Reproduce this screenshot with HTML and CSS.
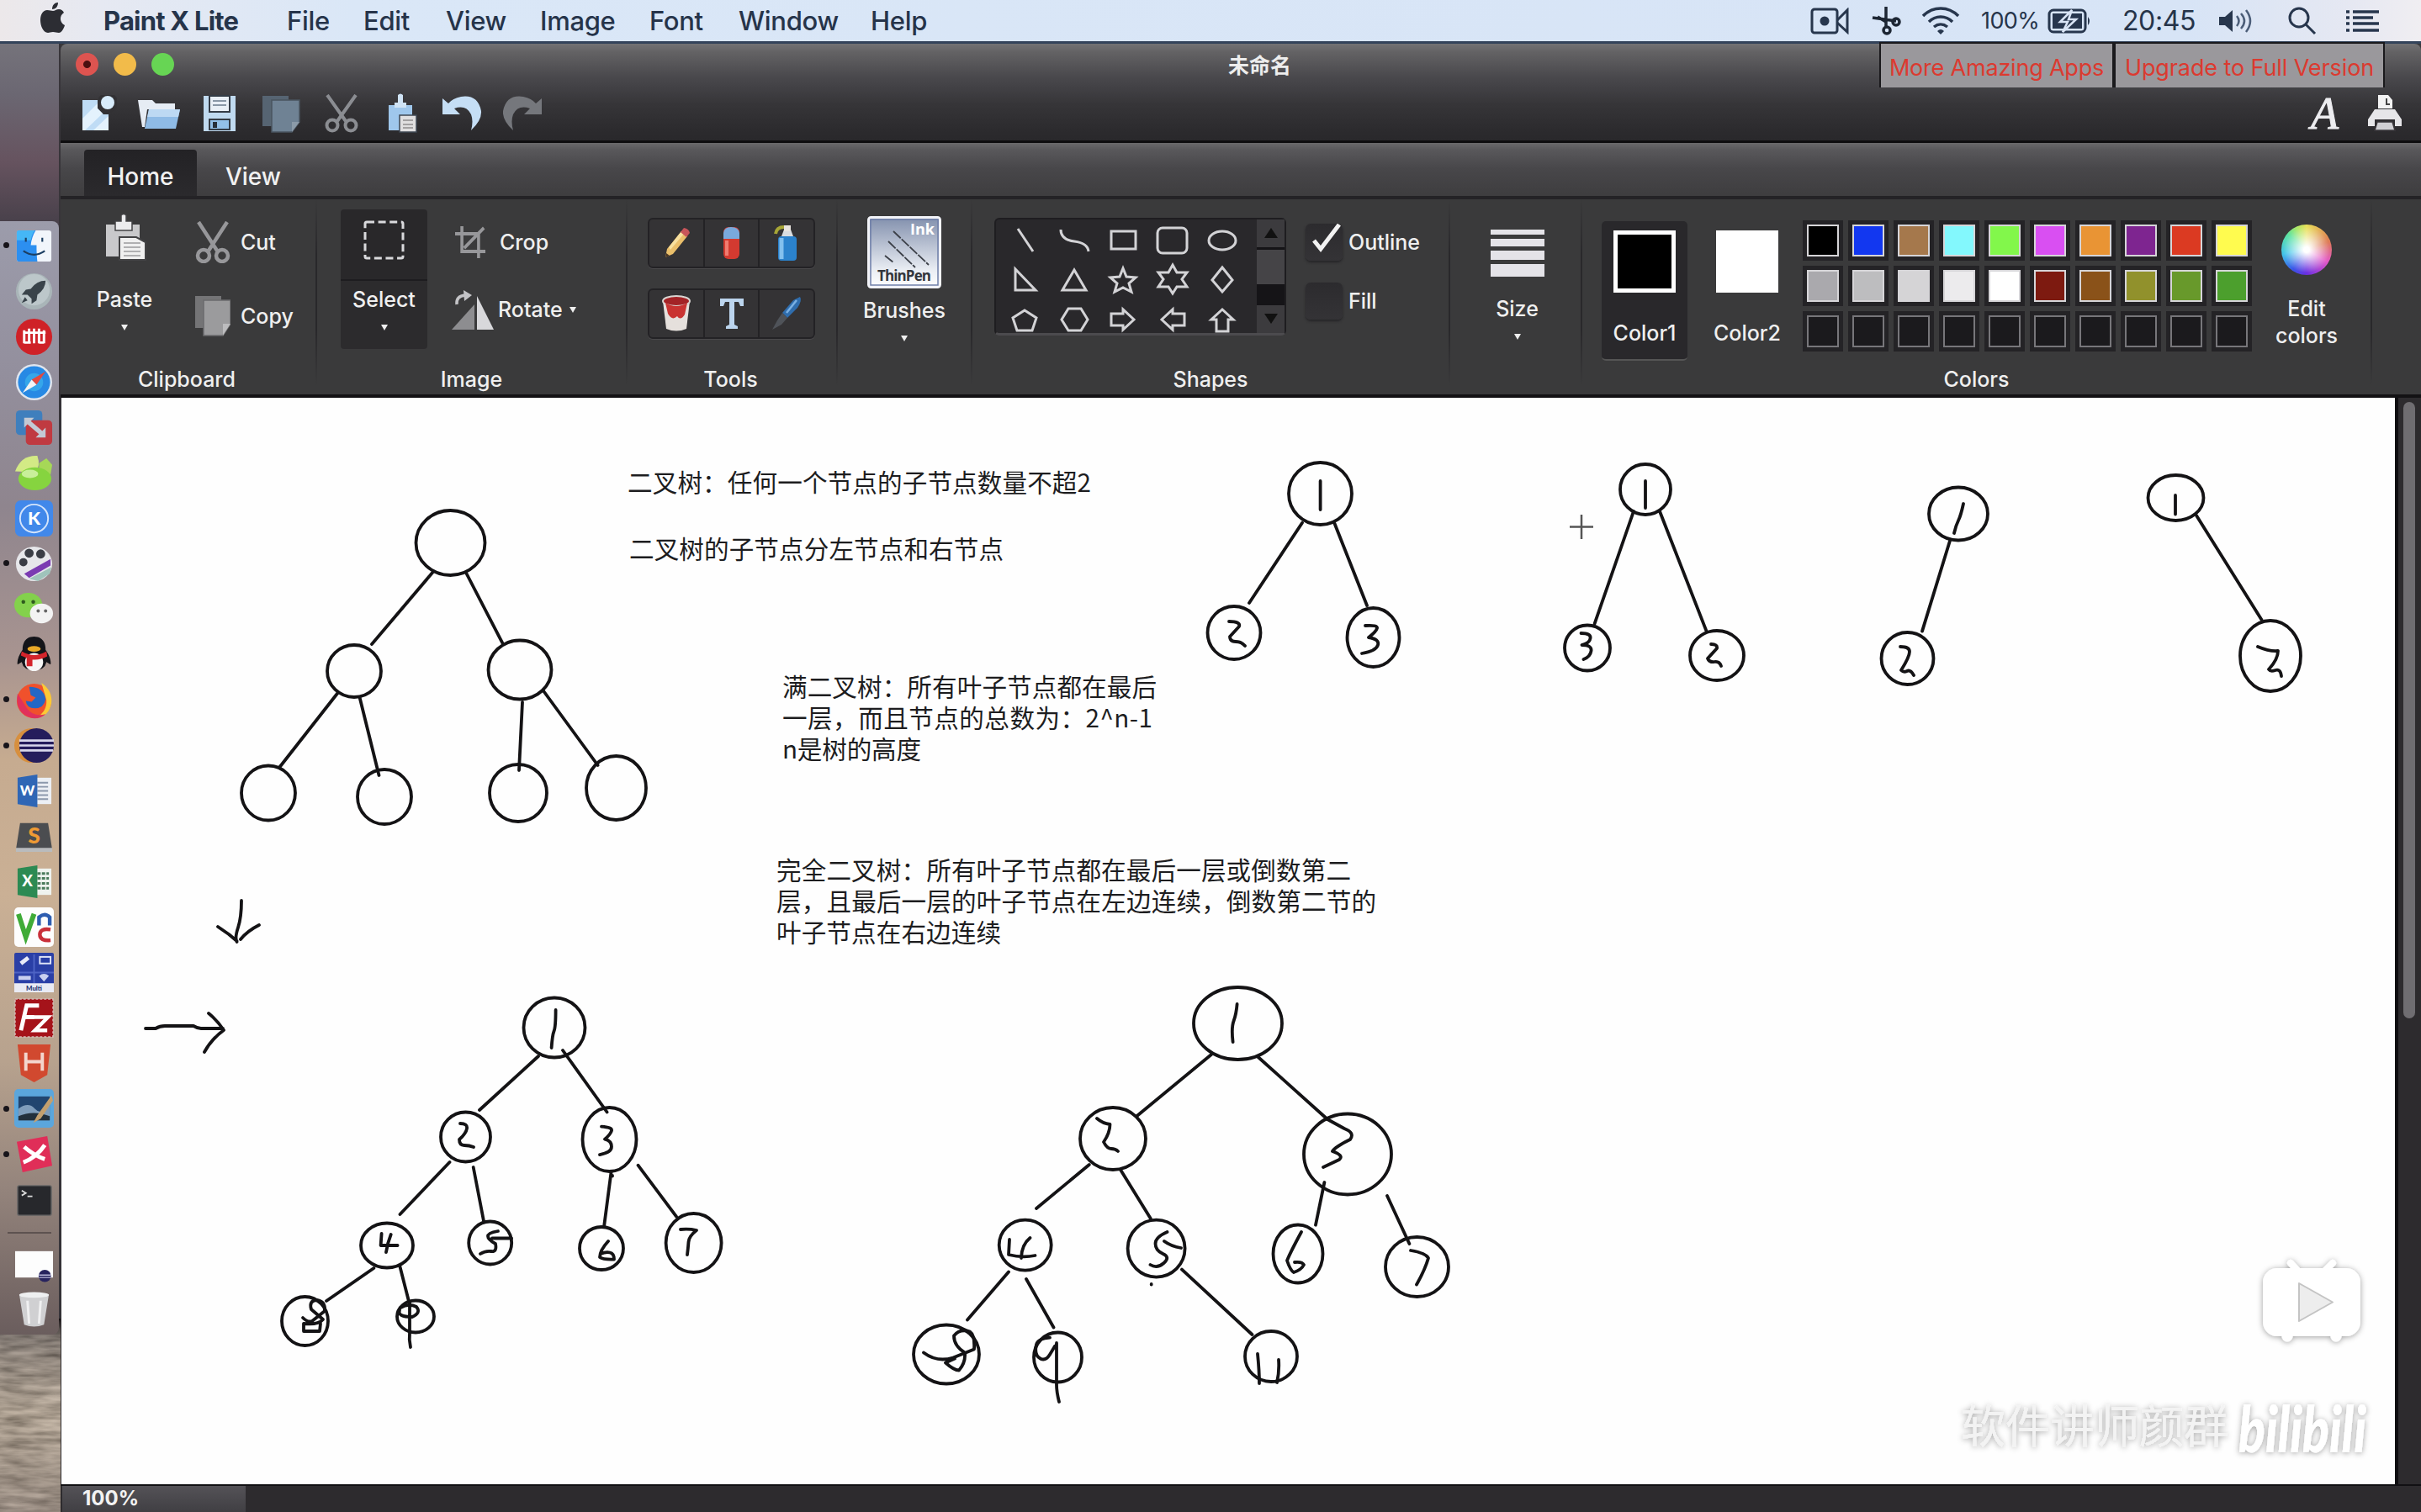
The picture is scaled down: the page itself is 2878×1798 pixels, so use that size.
FILE: index.html
```html
<!DOCTYPE html>
<html lang="zh">
<head>
<meta charset="utf-8">
<title>Paint X Lite</title>
<link rel="stylesheet" href="styles.css">
</head>
<body>
<header class="menubar">
  <nav class="menus">
    <svg width="32" height="40" viewBox="0 0 32 40"><path d="M22 2c0 5-3 8-7 8 0-5 3-8 7-8zM16 12c2 0 4-2 7-2 3 0 5 2 6 4-6 4-5 12 1 15-1 4-4 9-7 9s-4-1-7-1-4 1-6 1C4 38 1 29 1 23 1 15 5 11 9 11c3 0 5 1 7 1z" fill="#2c2d33"/></svg>
    <b>Paint X Lite</b><span>File</span><span>Edit</span><span>View</span><span>Image</span><span>Font</span><span>Window</span><span>Help</span>
  </nav>
  <div class="tray">
    <svg width="48" height="32" viewBox="0 0 48 32" fill="none" stroke="#27364d" stroke-width="3"><rect x="2" y="2" width="30" height="28" rx="3"/><path d="M32 15L44 3v26L32 18"/><circle cx="17" cy="16" r="5.500" fill="#27364d" stroke="none"/></svg>
    <svg width="36" height="34" viewBox="0 0 36 34" fill="none" stroke="#1d2633" stroke-width="3.500"><path d="M18 0v24M2 13l28 4M8 12l10 6"/><circle cx="19" cy="28" r="4"/><circle cx="30" cy="18" r="4"/></svg>
    <svg width="46" height="34" viewBox="0 0 46 34" fill="none" stroke="#27364d" stroke-width="3.500"><path d="M2 11C14-1 32-1 44 11M9 18c8-8 20-8 28 0M15 24c5-4 11-4 16 0"/><path d="M19 29q4-4 8 0l-4 4z" fill="#27364d" stroke="none"/></svg>
    <span class="pct">100%</span>
    <svg width="52" height="30" viewBox="0 0 52 30"><rect x="2" y="2" width="43" height="26" rx="5" fill="none" stroke="#27364d" stroke-width="3"/><rect x="6" y="6" width="35" height="18" fill="#27364d"/><path d="M48 10q4 5 0 10z" fill="#27364d"/><path d="M29 2L15 16h9l-6 12 16-15h-9z" fill="#27364d" stroke="#d9e4f5" stroke-width="2.500"/></svg>
    <span class="time">20:45</span>
    <svg width="42" height="30" viewBox="0 0 42 30" fill="none" stroke="#4b5d78" stroke-width="2.500"><path d="M1 10h7l9-8v26l-9-8H1z" fill="#27364d" stroke="none"/><path d="M22 9q5 6 0 12M27 6q8 9 0 18M33 2q10 13 0 26"/></svg>
    <svg width="36" height="34" viewBox="0 0 36 34" fill="none" stroke="#27364d" stroke-width="3"><circle cx="14" cy="13" r="11"/><path d="M22 21l11 11"/></svg>
    <svg width="42" height="28" viewBox="0 0 42 28" fill="none" stroke="#27364d" stroke-width="3.500"><path d="M1 3h4M9 3h31M1 10h4M9 10h24M1 17h4M9 17h31M1 25h4M9 25h31"/></svg>
  </div>
</header>

<div class="desktop">
<aside class="side">
  <svg class="wood" width="72" height="230" viewBox="0 0 72 230"><defs><filter id="grain" x="0" y="0" width="100%" height="100%"><feTurbulence type="fractalNoise" baseFrequency="0.025 0.14" numOctaves="3" seed="6"/><feColorMatrix values="0.9 0 0 0 0.04  0.8 0 0 0 0.03  0.7 0 0 0 0.02  0 0 0 0 1"/></filter><linearGradient id="wshade" x2="0" y2="1"><stop offset="0" stop-color="#120d10"/><stop offset=".1" stop-color="#3a3434" stop-opacity=".4"/><stop offset=".5" stop-color="#87755f" stop-opacity=".3"/><stop offset="1" stop-color="#5c4d46" stop-opacity=".4"/></linearGradient></defs><rect width="72" height="230" filter="url(#grain)"/><rect width="72" height="230" fill="url(#wshade)"/></svg>
  <div class="dock">
    <div class="slot on"><svg viewBox="0 0 48 48"><rect x="3" y="5" width="42" height="38" rx="3" fill="#f1f5fb"/><path d="M6 5h20q-5 8-6 18h7q0 12 1 20H6q-3 0-3-3V8q0-3 3-3z" fill="#2c8ff0"/><path d="M6 5h19q-4 5-5 12H3V8q0-3 3-3z" fill="#45b7f6"/><path d="M14 14v5M34 14v5M11 30q13 9 26 0" fill="none" stroke="#1c3f63" stroke-width="2.200"/></svg></div>
    <div class="slot"><svg viewBox="0 0 48 48"><circle cx="24" cy="24" r="22" fill="#a9b5b8"/><circle cx="24" cy="22" r="19" fill="#bcc7ca"/><path d="M38 11q-11 0-18 10l-6 1-5 6 7 0 5 5v6l6-4 1-7q10-7 10-17zM13 31l-4 7 7-3z" fill="#39434a"/></svg></div>
    <div class="slot"><svg viewBox="0 0 48 48"><circle cx="24" cy="24" r="22" fill="#cf2127"/><path d="M12 16v16M11 19h27M18 14v18M24 14v18M30 14v18M36 16v16M12 31h8M30 31h6" stroke="#fff" stroke-width="3" fill="none"/></svg></div>
    <div class="slot"><svg viewBox="0 0 48 48"><circle cx="24" cy="24" r="22" fill="#dfe5ee"/><circle cx="24" cy="24" r="19.500" fill="#2789e4"/><circle cx="24" cy="24" r="11" fill="#35a6ea"/><path d="M38 11L21 21l6 6z" fill="#e2483f"/><path d="M10 37l17-10-6-6z" fill="#f3f3f3"/></svg></div>
    <div class="slot"><svg viewBox="0 0 48 48"><rect x="2" y="3" width="32" height="30" rx="5" fill="#3f7fbd"/><rect x="14" y="15" width="32" height="30" rx="5" fill="#c03a41"/><path d="M12 12h12l-4 4 14 12 4-4v12H26l4-4-14-12-4 4z" fill="#c3c9d4"/></svg></div>
    <div class="slot"><svg viewBox="0 0 48 48"><path d="M1 22Q8 2 28 3q4 12-2 20z" fill="#d3ea85"/><path d="M30 12l9-6 7 8-2 12-14-4z" fill="#a6d857"/><ellipse cx="25" cy="31" rx="20" ry="14" fill="#86d43f"/><ellipse cx="19" cy="25" rx="10" ry="5" fill="#c8ef9a"/></svg></div>
    <div class="slot"><svg viewBox="0 0 48 48"><rect x="1" y="2" width="46" height="44" rx="7" fill="#4188ea"/><circle cx="24" cy="24" r="17" fill="none" stroke="#d3e4fb" stroke-width="2"/><text x="24" y="32" class="ico" font-size="22" text-anchor="middle" fill="#fff">K</text></svg></div>
    <div class="slot on"><svg viewBox="0 0 48 48"><ellipse cx="24" cy="24" rx="22" ry="21" fill="#e6e6ea"/><circle cx="18" cy="11" r="5.500" fill="#3a3d45"/><circle cx="32" cy="12" r="5.500" fill="#3a3d45"/><circle cx="11" cy="22" r="5" fill="#3a3d45"/><path d="M12 36L44 18v8L18 41z" fill="#7b3bb2"/><path d="M18 42l27-14-2 8-14 9z" fill="#9fc3bb"/></svg></div>
    <div class="slot"><svg viewBox="0 0 48 48"><ellipse cx="17" cy="19" rx="17" ry="15" fill="#83d14c"/><circle cx="11" cy="15" r="2.300" fill="#2f5b1e"/><circle cx="23" cy="15" r="2.300" fill="#2f5b1e"/><ellipse cx="33" cy="29" rx="14" ry="12" fill="#f3f3f3"/><circle cx="29" cy="26" r="2" fill="#666"/><circle cx="38" cy="26" r="2" fill="#666"/></svg></div>
    <div class="slot"><svg viewBox="0 0 48 48"><path d="M24 2c-10 0-14 7-14 16-5 7-7 14-6 18l5-3q2 10 15 10t15-10l5 3c1-4-1-11-6-18C38 9 34 2 24 2z" fill="#14151a"/><ellipse cx="24" cy="33" rx="11" ry="11" fill="#f6f6f6"/><ellipse cx="24" cy="17" rx="8" ry="3.500" fill="#eaa928"/><path d="M9 20q15 9 30 0l1 6q-9 5-18 4v8h-7v-10l-7-3z" fill="#d4242c"/></svg></div>
    <div class="slot on"><svg viewBox="0 0 48 48"><circle cx="24" cy="25" r="21" fill="#f0512c"/><path d="M33 3q14 10 12 25-3 16-19 18 14-8 13-22z" fill="#fbc936"/><path d="M4 16Q0 40 22 46q10 1 16-5-14 4-22-6z" fill="#e0315c"/><path d="M18 8q18 0 20 15-2 11-13 11-10 0-11-9l7 1 5-5-6-3z" fill="#2467c4"/></svg></div>
    <div class="slot on"><svg viewBox="0 0 48 48"><circle cx="21" cy="24" r="21" fill="#d78f3e"/><ellipse cx="27" cy="24" rx="21" ry="21" fill="#251d5c"/><path d="M6 18h42M6 24h42M7 30h40" stroke="#d7d6ea" stroke-width="2.600"/></svg></div>
    <div class="slot"><svg viewBox="0 0 48 48"><rect x="24" y="8" width="21" height="32" fill="#eceff4"/><path d="M28 14h13M28 19h13M28 24h13M28 29h13M28 34h13" stroke="#8b98ab" stroke-width="2"/><path d="M4 8l24-4v40L4 40z" fill="#2f66b5"/><text x="16" y="30" class="ico" font-size="17" text-anchor="middle" fill="#fff">W</text></svg></div>
    <div class="slot"><svg viewBox="0 0 48 48"><path d="M7 8h34l5 32H2z" fill="#4b4d50"/><path d="M2 38h44v5H2z" fill="#b9bbbd"/><text x="24" y="33" class="ico" font-size="27" text-anchor="middle" fill="#ef9b34">S</text></svg></div>
    <div class="slot"><svg viewBox="0 0 48 48"><rect x="24" y="8" width="21" height="32" fill="#eff3ef"/><path d="M28 14h14M28 20h14M28 26h14M28 32h14" stroke="#4a7a5b" stroke-width="3" stroke-dasharray="4 1.500"/><path d="M4 8l24-4v40L4 40z" fill="#2c8a53"/><text x="16" y="30" class="ico" font-size="19" text-anchor="middle" fill="#fff">X</text></svg></div>
    <div class="slot"><svg viewBox="0 0 48 48"><rect width="48" height="48" rx="5" fill="#fdfdfd"/><path d="M5 8l9 28L24 8" fill="none" stroke="#3fab37" stroke-width="6"/><path d="M30 22V12q7-6 13 0v10" fill="none" stroke="#2d5db0" stroke-width="4.500"/><path d="M44 27q-13-2-13 6t13 7" fill="none" stroke="#c9303a" stroke-width="4.500"/></svg></div>
    <div class="slot"><svg viewBox="0 0 48 48"><rect width="48" height="48" rx="2" fill="#2a3fa6"/><path d="M0 24h48M24 2v35" stroke="#4d63c4" stroke-width="2"/><path d="M8 13l9-7" stroke="#e8ebf8" stroke-width="5"/><rect x="31" y="5" width="13" height="8" fill="none" stroke="#dfe4f8" stroke-width="2"/><path d="M5 28h15v5H5zM30 28q6-5 12 0l-6 7z" fill="#c9d0f0"/><rect y="37" width="48" height="11" fill="#e9ebf4"/><text x="24" y="46" class="ico" font-size="8" text-anchor="middle" fill="#26336f">Multi</text></svg></div>
    <div class="slot"><svg viewBox="0 0 48 48"><rect x="1" y="1" width="46" height="46" fill="#a5131a" stroke="#d8b9b5" stroke-width="1.500" stroke-dasharray="3 2"/><path d="M8 39L15 9h15M12 23h12" fill="none" stroke="#fff" stroke-width="5"/><path d="M22 23h19L25 39h15" fill="none" stroke="#fff" stroke-width="4.500"/></svg></div>
    <div class="slot"><svg viewBox="0 0 48 48"><path d="M4 1h40l-4 37-16 9-16-9z" fill="#d1492f"/><path d="M14 11v22M34 11v22M14 22h20" stroke="#f3d6cd" stroke-width="4"/></svg></div>
    <div class="slot on"><svg viewBox="0 0 48 48"><rect width="48" height="47" rx="5" fill="#5ba6dc"/><rect x="5" y="9" width="38" height="29" fill="#21456f"/><path d="M5 24q12-9 20 0t18-5v19H5z" fill="#7f9dbb"/><path d="M5 33q18-8 38 0v5H5z" fill="#23303c"/><path d="M45 8L28 32l-5 9 9-5 15-22z" fill="#c4a06e"/></svg></div>
    <div class="slot on"><svg viewBox="0 0 48 48"><path d="M3 9L40 2l6 36-36 8z" fill="#e02e58"/><path d="M12 15q11 10 25 15M37 13q-10 15-26 21" stroke="#fff" stroke-width="5" fill="none"/></svg></div>
    <div class="slot"><svg viewBox="0 0 48 48"><rect x="4" y="6" width="41" height="36" rx="2" fill="#27282c" stroke="#6a6868" stroke-width="1.500"/><path d="M9 12l5 3-5 3M16 19h6" stroke="#dcdcdc" stroke-width="1.800" fill="none"/></svg></div>
    <hr class="dockline">
    <div class="slot"><svg viewBox="0 0 48 48"><rect x="1" y="7" width="46" height="32" fill="#fdfdfd"/><circle cx="37" cy="37" r="7.500" fill="#27235e"/><path d="M30 36h14M30 39h14" stroke="#b9b7d8" stroke-width="1.300"/></svg></div>
    <div class="slot"><svg viewBox="0 0 48 48"><path d="M6 4h36l-6 37q-12 5-24 0z" fill="#d5d6d8" opacity=".95"/><ellipse cx="24" cy="5" rx="18" ry="3.500" fill="#eeeff0"/><path d="M16 12l2 28M32 12l-2 28" stroke="#f0f0f1" stroke-width="3"/></svg></div>
  </div>
</aside>

<main class="window">
  <section class="titlebar">
    <div class="lights"><i class="red"></i><i class="amber"></i><i class="green"></i></div>
    <h1>未命名</h1>
    <div class="promos"><a>More Amazing Apps</a><a>Upgrade to Full Version</a></div>
  </section>
  <section class="quickbar">
    <div class="quick">
      <svg width="42" height="44" viewBox="0 0 42 44"><path d="M1 6h18v10l7 7h6v19H1z" fill="#bfdcf5"/><path d="M1 28L19 10v6l6 6L4 42H1zM14 42l18-17v17z" fill="#e4f2fd"/><circle cx="31" cy="9" r="12" fill="#323134"/><circle cx="31" cy="9" r="8" fill="#d8ecfb"/></svg>
      <svg width="50" height="42" viewBox="0 0 50 42"><path d="M0 5h17l4 4h23v7H11L8 37 5 37z" fill="#e6ecf4"/><path d="M13 16h37l-5 23H8z" fill="#8fbbe6"/><path d="M13 16h37l-2 9H11z" fill="#bdd9f3"/></svg>
      <svg width="38" height="44" viewBox="0 0 38 44"><path d="M0 1h38v42H0z" fill="#c0daf0"/><path d="M7 1h24v19H7z" fill="#e9eff6" stroke="#343c46" stroke-width="2"/><path d="M11 7h16M11 12h16" stroke="#8997a6" stroke-width="2"/><path d="M7 29h24v12H7z" fill="#92c0e8" stroke="#343c46" stroke-width="2"/><rect x="11" y="32" width="5" height="7" fill="#27303a"/></svg>
      <svg width="46" height="46" viewBox="0 0 46 46"><path d="M0 2h31v36H0z" fill="#566472"/><path d="M11 7h33v26l-9 12H11z" fill="#6f8294" stroke="#49545f" stroke-width="1.500"/><path d="M44 33h-9v12z" fill="#8b9aa8"/></svg>
      <svg width="40" height="46" viewBox="0 0 40 46" fill="none" stroke="#8b8d92" stroke-width="4"><path d="M3 1l22 31M37 1L15 32"/><circle cx="9" cy="37" r="6.500"/><circle cx="31" cy="37" r="6.500"/></svg>
      <svg width="34" height="48" viewBox="0 0 34 48"><path d="M0 14h28v30H0z" fill="#9fc7ec"/><path d="M7 11h4V2q3-3 6 0v9h4v6H7z" fill="#cfe3f5"/><path d="M13 26h20v20H13z" fill="#e0dfe0" stroke="#3f4853" stroke-width="1.500"/><path d="M17 32h12M17 37h12M17 41h12" stroke="#8f8d8d" stroke-width="1.500"/></svg>
      <svg width="48" height="42" viewBox="0 0 48 42"><path d="M0 3v19h21l-7-7q14-5 20 7 3 8 0 19 13-12 12-23Q42-2 22 1 12 3 7 9z" fill="#c5def5"/></svg>
      <svg width="48" height="42" viewBox="0 0 48 42"><path d="M46 3v19H25l7-7q-14-5-20 7-3 8 0 19Q-1 29 0 18 4-2 24 1q10 2 15 8z" fill="#75777c"/></svg>
    </div>
    <div class="quickright">
      <span class="fonticon">A</span>
      <svg width="42" height="44" viewBox="0 0 42 44"><path d="M13 0h12l5 6v10H13z" fill="#f3f3f3"/><path d="M23 4v7h4" stroke="#444" stroke-width="2" fill="none"/><path d="M9 17h24l8 12v8h-8v-8H9v8H1v-8z" fill="#e6e6e9"/><path d="M12 32h18l3 10H9z" fill="#cfcfd3" stroke="#39373b" stroke-width="1.500"/></svg>
    </div>
  </section>
  <nav class="tabs"><a class="active">Home</a><a>View</a></nav>

  <section class="ribbon">
    <div class="group clip">
      <div class="body">
        <button class="big">
          <svg width="54" height="60" viewBox="0 0 54 60"><path d="M2 13h40v38H2z" fill="#c9c9cb"/><path d="M13 9h7V2q3-3 6 0v7h7v11H13z" fill="#ececee" stroke="#434345" stroke-width="1.500"/><path d="M18 28h20l11 6v21H18z" fill="#f0f0f0" stroke="#434345" stroke-width="2"/><path d="M23 35h20M23 40h20M23 45h20M23 50h20" stroke="#9b9b9d" stroke-width="1.500"/></svg>
          <span>Paste</span><em></em>
        </button>
        <div class="smalls">
          <div class="row r1"><svg width="42" height="50" viewBox="0 0 42 50" fill="none" stroke="#97979a" stroke-width="4.500"><path d="M4 1l22 34M38 1L16 35"/><circle cx="10" cy="41" r="7"/><circle cx="32" cy="41" r="7"/></svg><span>Cut</span></div>
          <div class="row r2"><svg width="42" height="50" viewBox="0 0 42 50"><path d="M0 1h31v38H0z" fill="#747476"/><path d="M10 6h32v28l-9 14H10z" fill="#9b9b9d" stroke="#6b6b6d" stroke-width="1.500"/><path d="M42 34h-9v14z" fill="#bcbcbe"/></svg><span>Copy</span></div>
        </div>
      </div>
      <footer>Clipboard</footer>
    </div>

    <div class="group image">
      <div class="body">
        <button class="big tile">
          <svg width="50" height="48" viewBox="0 0 50 48"><rect x="2" y="2" width="45" height="43" rx="2" fill="none" stroke="#d9d9dc" stroke-width="3" stroke-dasharray="9 4.600"/></svg>
          <span>Select</span><em></em>
        </button>
        <div class="smalls">
          <div class="row r1"><svg width="36" height="38" viewBox="0 0 40 38" preserveAspectRatio="none" fill="none" stroke="#97979a" stroke-width="4"><path d="M9 0v30h31M0 9h31v29M12 26L38 2"/></svg><span>Crop</span></div>
          <div class="row r2"><svg width="52" height="52" viewBox="0 0 52 52"><path d="M28 48H1L28 18z" fill="#8d8d90"/><path d="M31 8v40h20z" fill="#d8d8db"/><path d="M7 18Q6 8 17 7" fill="none" stroke="#c4c4c7" stroke-width="3.500"/><path d="M15 1l10 6-9 7z" fill="#c4c4c7"/></svg><span>Rotate</span><em></em></div>
        </div>
      </div>
      <footer>Image</footer>
    </div>

    <div class="group tools">
      <div class="body">
        <div class="trio">
          <span><svg width="34" height="40" viewBox="0 0 34 40"><path d="M4 37l2-10L23 6l7 6L13 33z" fill="#eabf6b"/><path d="M8 25L23 6l3 3-16 19z" fill="#f7e09f"/><path d="M22 7l4-5q6 1 7 6l-4 5z" fill="#c8555a"/><path d="M4 37l1-5 4 3z" fill="#4a3522"/></svg></span>
          <span><svg width="24" height="40" viewBox="0 0 24 40"><rect x="2" y="1" width="19" height="38" rx="6" fill="#d33a30"/><path d="M2 15V8q1-7 9-7 9 0 10 7v7z" fill="#79a9dc"/><path d="M6 17v18" stroke="#ef7c70" stroke-width="4"/></svg></span>
          <span><svg width="30" height="46" viewBox="0 0 30 46"><rect x="5" y="15" width="22" height="29" rx="4" fill="#2b82cc"/><path d="M9 17v25" stroke="#83c0ee" stroke-width="5"/><path d="M9 15l3-8h8l3 8z" fill="#d9dde0"/><rect x="12" y="2" width="8" height="7" fill="#e9e5df"/><path d="M12 4Q3 4 2 12" stroke="#a7a636" stroke-width="4" fill="none"/></svg></span>
        </div>
        <div class="trio">
          <span><svg width="36" height="44" viewBox="0 0 36 44"><path d="M2 7l4 33q12 5 24 0l4-33z" fill="#e5e0dc"/><ellipse cx="18" cy="7" rx="16" ry="6" fill="#a32326" stroke="#d9d5d1" stroke-width="2"/><path d="M5 9q13 8 26 0l-3 14q-5 8-9 2-6 6-11-3z" fill="#c93331"/></svg></span>
          <span><svg width="30" height="38" viewBox="0 0 30 38"><path d="M1 1h28v9h-4l-2-5h-5v27l4 2v3H8v-3l4-2V5H7L5 10H1z" fill="#bcd5ee"/></svg></span>
          <span><svg width="38" height="42" viewBox="0 0 38 42"><path d="M35 1q3 4-3 13L20 26l-6-6L27 5z" fill="#2f6dad"/><path d="M20 26l-6-6-6 9-6 11 11-6z" fill="#4f5359"/><path d="M31 5L19 20" stroke="#7ab0e2" stroke-width="2.500"/></svg></span>
        </div>
      </div>
      <footer>Tools</footer>
    </div>

    <div class="group brushes">
      <div class="body">
        <button class="big">
          <svg width="88" height="86" viewBox="0 0 88 86"><defs><linearGradient id="ink" x2="0" y2="1"><stop offset="0" stop-color="#8290ad"/><stop offset=".75" stop-color="#e9edf3"/><stop offset="1" stop-color="#fff"/></linearGradient></defs><rect x="1.500" y="1.500" width="85" height="83" rx="3" fill="url(#ink)" stroke="#f2f3f8" stroke-width="3"/><rect x="4" y="4" width="80" height="78" fill="none" stroke="#6f7fa9" stroke-width="1.500"/><path d="M31 18l42 40M25 30l32 31M21 47l10 8" stroke="#3c4048" stroke-width="1.800" stroke-dasharray="12 1.500"/><text x="51" y="22" class="ui" font-size="18" font-weight="700" fill="#fff">Ink</text><text x="12" y="77" class="ui" font-size="17" font-weight="700" fill="#33363c" textLength="64">ThinPen</text></svg>
          <span>Brushes</span><em></em>
        </button>
      </div>
    </div>

    <div class="group shapes">
      <div class="body">
        <div class="gallery">
          <svg width="310" height="136" viewBox="1184 261 310 136" fill="none" stroke="#d3d3d6" stroke-width="3">
            <path d="M1210 272l18 27M1261 273q0 12 16 14t17 12"/><rect x="1321" y="275" width="29" height="21"/><rect x="1376" y="271" width="35" height="30" rx="6"/><ellipse cx="1453" cy="286" rx="16" ry="11"/>
            <path d="M1207 320v25h24zM1277 321l-14 24h28zM1335 319l4 10 11 1-8 7 3 10-10-5-10 5 3-10-8-7 11-1zM1394 315l5 9h12l-6 8 6 9h-12l-5 8-5-8h-12l6-9-6-8h12zM1453 318l12 15-12 14-12-14z"/>
            <path d="M1218 369l14 9-5 15h-18l-5-15zM1270 367h15l8 13-8 13h-15l-8-13zM1321 373h14v-5l13 12-13 12v-5h-14zM1408 373h-14v-5l-13 12 13 12v-5h14zM1446 394v-14h-6l13-12 13 12h-6v14z"/>
          </svg>
          <div class="vbar"><b class="up"></b><i></i><b class="down"></b></div>
        </div>
        <div class="checks">
          <label><svg width="44" height="44" viewBox="0 0 44 44"><path d="M10 20l8 10L40 1" fill="none" stroke="#f2f2f2" stroke-width="5"/></svg><span>Outline</span></label>
          <label><svg width="44" height="44" viewBox="0 0 44 44"></svg><span>Fill</span></label>
        </div>
      </div>
      <footer>Shapes</footer>
    </div>

    <div class="group size">
      <div class="body">
        <button class="big">
          <svg width="64" height="60" viewBox="0 0 64 60" fill="#e4e3e8"><rect y="1" width="64" height="6"/><rect y="12" width="64" height="9"/><rect y="26" width="64" height="11"/><rect y="42" width="64" height="15"/></svg>
          <span>Size</span><em></em>
        </button>
      </div>
    </div>

    <div class="group colors">
      <div class="body">
        <div class="pick chosen"><i class="black"></i><span>Color1</span></div>
        <div class="pick"><i></i><span>Color2</span></div>
        <div class="palette">
          <i style="background:#000"></i><i style="background:#1237f0"></i><i style="background:#a5784c"></i><i style="background:#83f8fd"></i><i style="background:#82f74b"></i><i style="background:#d94ff2"></i><i style="background:#e99434"></i><i style="background:#7e2590"></i><i style="background:#db3a22"></i><i style="background:#fffb4f"></i>
          <i style="background:#aaa9ad"></i><i style="background:#bdbdbf"></i><i style="background:#d5d4d6"></i><i style="background:#ecebed"></i><i style="background:#fff"></i><i style="background:#7d1a10"></i><i style="background:#8a5219"></i><i style="background:#91912c"></i><i style="background:#68992b"></i><i style="background:#4c9f2d"></i>
          <i class="none"></i><i class="none"></i><i class="none"></i><i class="none"></i><i class="none"></i><i class="none"></i><i class="none"></i><i class="none"></i><i class="none"></i><i class="none"></i>
        </div>
        <div class="edit"><i class="wheel"></i><span>Edit<br>colors</span></div>
      </div>
      <footer>Colors</footer>
    </div>
  </section>

  <section class="work">
    <svg class="canvas" width="2774" height="1292" viewBox="73 473 2774 1292">
      <defs>
        <filter id="soft" x="-10%" y="-30%" width="120%" height="160%"><feDropShadow dx="0" dy="1" stdDeviation="3.500" flood-color="#000" flood-opacity=".38"/></filter>
      </defs>
      <g class="ink">
        <!-- empty full tree -->
        <ellipse cx="535.500" cy="645.500" rx="41" ry="38.500"/><ellipse cx="421" cy="798" rx="32" ry="31"/><ellipse cx="618" cy="796.500" rx="37.500" ry="35"/>
        <ellipse cx="319" cy="943" rx="32" ry="32.500"/><ellipse cx="457" cy="947.500" rx="32" ry="32.500"/><ellipse cx="616" cy="943" rx="34" ry="34"/><ellipse cx="732.500" cy="937" rx="35.500" ry="38"/>
        <path d="M514 681L442 766M554 681l44 85M401.500 824L332.600 912M427.500 829l23 93M621 835l-4 81M645.600 821l65 89"/>
        <!-- ordered pairs -->
        <ellipse cx="1569.500" cy="587" rx="37.500" ry="37"/><ellipse cx="1467" cy="752.500" rx="31.500" ry="31.500"/><ellipse cx="1632.500" cy="758" rx="31" ry="35"/>
        <path d="M1569.600 572v34M1548 621.700L1485 717M1586.600 622.700L1625 720"/>
        <path d="M1461 739q14 0 12 6l-11 12q0 6 7 6t11 5M1623 744q15-1 14 3t-10 11q13 2 11 9t-19 10"/>
        <ellipse cx="1956" cy="582" rx="30" ry="30"/><ellipse cx="1887" cy="770.500" rx="27" ry="27"/><ellipse cx="2041" cy="779.500" rx="32" ry="29.500"/>
        <path d="M1956 572v32M1942 608l-46.400 133.600M1973 608l55.600 142.600"/>
        <path d="M1879.500 753q12 0 11 6t-10 8q12 0 11 7t-9 10M2034 766q8 0 7 5l-11 12q2 5 8 4t8 5"/>
        <ellipse cx="2328" cy="611" rx="35" ry="31.500"/><ellipse cx="2267.500" cy="783" rx="31" ry="31"/>
        <path d="M2334 599q-3 14-6 20t-5 15M2318 643l-33 107.600M2259 769q11 0 11 6t-10 22q3 3 7 1t8 5"/>
        <ellipse cx="2586.500" cy="592" rx="33" ry="27"/><ellipse cx="2699" cy="780" rx="36" ry="42"/>
        <path d="M2586 589v22.600M2611 613l77.500 124M2684 769q14 6 24 5 0 10-11 22 2 3 8 1t7 7"/>
        <!-- strokes pointing at the tree -->
        <path d="M287 1071q0 20-4 32t-1.500 17M259 1102l13 9 9.500 8M308 1100q-14 7-22 17M173 1223h12q5-3 11-3h34q5 3 9 3h26M248 1205q10 8 18 20-14 10-23 26"/>
        <!-- complete tree -->
        <ellipse cx="659" cy="1222" rx="36.500" ry="35.500"/><ellipse cx="553.500" cy="1352" rx="29.500" ry="29.500"/><ellipse cx="724.500" cy="1355" rx="32" ry="38"/><ellipse cx="460" cy="1481" rx="31" ry="26.500"/><ellipse cx="582.700" cy="1478" rx="25.500" ry="25.500"/><ellipse cx="715" cy="1484.500" rx="26" ry="25.500"/><ellipse cx="824.600" cy="1478" rx="33" ry="35"/><ellipse cx="362.500" cy="1571" rx="27.500" ry="29"/><ellipse cx="494" cy="1565.500" rx="22" ry="19"/>
        <path d="M640 1256l-70 64M669 1249l52.600 73.500M534.500 1382l-59 62M562.700 1388l12.300 64M726.500 1394l-8.500 65M758.500 1385.700l45.500 61M444.400 1508L388 1547M475.400 1506l10.600 41.500"/>
        <path d="M660.600 1201q0 20-2 25t-3 20M547 1336q9 0 8 6t-9 13q0 7 6 7t11 2M715 1339.600q13 1 12 5t-8 10q8 2 8 9t-14 9.500M728 1398v.5M453.600 1467l-1 14h20M464.700 1468q-4 10-5.700 21M592 1464q-12 2-12 6t9 9q2 10-5 9t-13 3M585 1472.500h23M723 1476q-10 11-10 19 4 3 17 2.500 0-7-5-8t-11 1.500M809 1462q10-1 19 1-9 7-9.500 14t-1.500 15"/>
        <path d="M360 1567q6 6 11 4l15-12q1-12-10-13-9 1-6 11l14 12q-6 7-23 5v9h19l1-9M476 1555q10-6 19-1 6 7-5 12-18 0-15-8M487 1549v36q-1 8 1 17"/>
        <!-- incomplete tree -->
        <ellipse cx="1471.500" cy="1217" rx="52.500" ry="43"/><ellipse cx="1323" cy="1354" rx="39" ry="37"/><ellipse cx="1602" cy="1372.500" rx="52" ry="48"/><ellipse cx="1218.700" cy="1480.600" rx="31" ry="30"/><ellipse cx="1374.600" cy="1484.600" rx="34" ry="34"/><ellipse cx="1543" cy="1491" rx="29.500" ry="34.500"/><ellipse cx="1684.500" cy="1506.500" rx="37.500" ry="35.500"/><ellipse cx="1125" cy="1610.500" rx="39" ry="35"/><ellipse cx="1257.500" cy="1614" rx="28.500" ry="29.500"/><ellipse cx="1511" cy="1613" rx="31" ry="30"/>
        <path d="M1440 1254l-89 73.500M1494.500 1256l83.500 75M1294.800 1385L1232 1437M1332 1391l35.800 58M1574.400 1406l-10.400 50.700M1649 1422l26.400 57M1199 1512.500l-49 57M1220 1521l32.500 57.500M1405 1509.600l83.500 77.400"/>
        <path d="M1470.600 1194q-1 12-4 20t-1 25M1304 1330q7 6 15.500 7 0 10-7.500 21 4 8 9 8t8 3M1578 1331l20 11q13 5 7 13-18 9-21 14 14 5 8 10l-19 9M1200 1474l-1 18q16 4 31.500 1M1224.500 1472q-10 8-10.500 24M1387.500 1465q-14 6-14 14 0 8 9 12t1 11-16 2M1384 1476q8 6 20 8M1368.700 1527v.5M1547 1465q-13 24-17 34 4 12 8 14 9-3 12-9-2-4-11-3M1677 1487q18 3 21 9-4 14-14 31.500"/>
        <path d="M1098 1608.500q16 12 35 6l25-10q1-17-5-21-12-4-19 5 0 12 13 20 1 12-7 21-6 0-16-9l11-5M1248 1590.700q-14 1-16 8-3 13 5 17 6 3 11-5l6-10M1256 1597v50q0 8 3 20M1495 1610q2 20 2 35M1520 1617q1 14-2 27"/>
      </g>
      <path d="M1866 626.500h28M1880 612v29" stroke="#555" stroke-width="2.500"/>
      <g class="note">
        <text x="746" y="585" textLength="551">二叉树：任何一个节点的子节点数量不超2</text>
        <text x="748" y="664" textLength="445">二叉树的子节点分左节点和右节点</text>
        <text x="930" y="828" textLength="445">满二叉树：所有叶子节点都在最后</text>
        <text x="930" y="865" textLength="440">一层，而且节点的总数为：2^n-1</text>
        <text x="930" y="902" textLength="165">n是树的高度</text>
        <text x="923" y="1046" textLength="683">完全二叉树：所有叶子节点都在最后一层或倒数第二</text>
        <text x="923" y="1083" textLength="713">层，且最后一层的叶子节点在左边连续，倒数第二节的</text>
        <text x="923" y="1120" textLength="267">叶子节点在右边连续</text>
      </g>
      <g filter="url(#soft)" fill="#fff">
        <path d="M2723 1502l13 14M2773 1502l-14 14" stroke="#fff" stroke-width="8" stroke-linecap="round"/><rect x="2690" y="1508" width="116" height="81" rx="17"/><circle cx="2719" cy="1589" r="6.500"/><circle cx="2777" cy="1589" r="6.500"/>
      </g>
      <path d="M2733 1526l40 22.500-40 22.500z" fill="#ededed" stroke="#c4c4c4" stroke-width="2" stroke-linejoin="round"/>
      <g filter="url(#soft)">
        <text x="2331" y="1716" class="owner" textLength="318">软件讲师颜群</text>
        <text x="2661" y="1727" class="brand" textLength="152" lengthAdjust="spacingAndGlyphs">bilibili</text>
      </g>
    </svg>
    <div class="scroll"><i></i></div>
  </section>
  <footer class="status"><span>100%</span></footer>
</main>
</div>
</body>
</html>
```
FILE: styles.css
```css
* { box-sizing: border-box; margin: 0; padding: 0; }
body { width: 2878px; height: 1798px; overflow: hidden; font-family: Inter, "Noto Sans CJK SC", sans-serif; background: #3a393b; }
svg { display: block; flex: none; }
.ico { font-family: Lato, sans-serif; font-weight: 900; }
.ui { font-family: "Open Sans", sans-serif; }

.menubar { height: 52px; display: flex; justify-content: space-between; background: linear-gradient(90deg, #ece8ea 0, #e6e9f2 120px, #dae7f7 420px, #d7e4f6 2600px, #e6e8f2 2800px, #f0eef2); border-bottom: 3px solid #33435a; color: #26344a; font-size: 31px; line-height: 50px; }
.menus { display: grid; grid-template-columns: 76px 218px 91px 98px 112px 130px 106px 157px 100px; padding-left: 47px; align-items: center; white-space: nowrap; letter-spacing: -.3px; font-weight: 500; }
.menus svg { margin-top: -8px; }
.menus b { font-weight: 700; letter-spacing: -.8px; }
.tray { display: grid; grid-template-columns: 72px 60px 71px 79px 89px 114px 82px 69px 90px; align-items: center; }
.pct { font-size: 27px; letter-spacing: -.6px; }
.time { font-size: 32px; letter-spacing: -.4px; }

.desktop { display: flex; height: 1746px; }
.side { width: 72px; position: relative; padding-top: 211px; background: linear-gradient(#75737b 0, #6b6772 60px, #66535f 140px, #49414b 211px, #49414b 230px, #8b8085 600px, #a38e7c 1000px, #6c5b51 1500px); border-right: 2px solid #38353a; }
.wood { position: absolute; left: 0; bottom: 0; }
.dock { position: relative; width: 70px; height: 1324px; padding-top: 2px; border-radius: 0 8px 8px 0; background: linear-gradient(#9c9cab 0, #938f9d 180px, #8f858e 340px, #a89490 520px, #c6ab90 640px, #cab095 800px, #b7a28e 1000px, #94847c 1150px, #6a5d5d); }
.slot { height: 54.050px; display: flex; align-items: center; justify-content: flex-end; padding-right: 6px; position: relative; }
.slot svg { width: 47px; height: 47px; }
.slot.on::before { content: ""; position: absolute; left: 4px; top: 23px; width: 7px; height: 7px; border-radius: 50%; background: #17141a; }
.dockline { border: 0; height: 2px; background: #5d5250; margin: 11px 9px 10px; }

.window { width: 2806px; display: flex; flex-direction: column; }
.titlebar { height: 52px; display: grid; grid-template-columns: 690px 1fr 645px; background: linear-gradient(#727173 0, #636264 10px, #49484c 40px, #424145); border-radius: 8px 8px 0 0; }
.lights { display: flex; gap: 18px; padding: 11px 0 0 18px; }
.lights i { width: 27px; height: 27px; border-radius: 50%; }
.red { background: radial-gradient(circle, #4a0f10 0 4px, #dd5450 5px); }
.amber { background: #f2bb4a; }
.green { background: #67d554; }
.titlebar h1 { font: 700 25px/48px "Noto Sans CJK SC", sans-serif; color: #ededed; text-align: center; }
.promos { display: flex; gap: 4px; padding-left: 3px; }
.promos a { height: 53px; line-height: 57px; background: #9a989c; box-shadow: 0 0 0 2px #1a191c; color: #dc3a30; font-size: 27px; text-align: center; width: 275px; white-space: nowrap; letter-spacing: -.2px; }
.promos a + a { width: 318px; letter-spacing: -.1px; }
.quickbar { height: 66px; display: flex; justify-content: space-between; align-items: center; padding: 0 22px 0 25px; background: linear-gradient(#424145 0, #363538 20px, #2c2b2e 50px, #29282b); border-bottom: 3px solid #0e0d0f; }
.quick { display: grid; grid-template-columns: 67px 78px 70px 74px 76px 64px 72px 48px; align-items: center; }
.quickright { display: flex; align-items: center; gap: 25px; }
.fonticon { font: italic 400 54px/60px "Liberation Serif", serif; color: #ededf0; -webkit-text-stroke: 1px #ededf0; width: 42px; }
.tabs { height: 67px; display: flex; padding: 8px 0 0 28px; background: linear-gradient(#6a696b 0, #59585b 8px, #48474a 30px, #3f3e40 60px); border-bottom: 4px solid #242326; color: #f1f1f1; font-size: 28px; font-weight: 500; line-height: 64px; }
.tabs a { width: 134px; text-align: center; }
.tabs .active { background: linear-gradient(#232225, #2b2a2d); border-radius: 4px 4px 0 0; }

.ribbon { height: 238px; display: flex; background: #3a3a3b; border-bottom: 4px solid #131214; color: #efefef; font-size: 25px; font-weight: 500; white-space: nowrap; }
.group { height: 221px; display: flex; flex-direction: column; border-right: 2px solid; border-image: linear-gradient(#3a3a3b, #29282b 30%, #29282b 70%, #3a3a3b) 1; flex: none; }
.group footer { text-align: center; line-height: 32px; margin-top: auto; height: 23px; }
.body { height: 197px; display: flex; }
.ribbon button { font: inherit; color: inherit; background: none; border: 0; }
.big { display: flex; flex-direction: column; align-items: center; }
.big span { line-height: 30px; }
em { width: 0; height: 0; border: 4px solid transparent; border-top: 7px solid #eee; border-bottom: 0; }
.big em { margin-top: 15px; }
.row { display: flex; align-items: center; gap: 12px; }

.clip { width: 305px; padding-right: 3px; }
.clip .big { width: 90px; margin-left: 31px; padding-top: 17px; }
.clip .big svg { margin: 0 0 27px 5px; }
.clip .smalls { padding: 26px 0 0 39px; }
.clip .r2 { margin-top: 38px; }

.image { width: 369px; }
.tile { width: 103px; height: 166px; margin: 12px 0 0 28px; border-radius: 4px; }
.ribbon .tile { background: linear-gradient(#29282a 0 83px, #1e1d20 83px 85px, #2c2b2d 85px); }
.tile svg { margin: 13px 0 31px; }
.image .smalls { padding: 32px 0 0 28px; }
.image .r1 { padding-left: 5px; gap: 17px; }
.image .r2 { margin-top: 37px; gap: 4px; }
.image .r2 span { margin-top: -4px; }
.image .r2 em { margin: -2px 0 0 4px; }

.tools { width: 250px; }
.tools .body { flex-direction: column; padding: 22px 0 0 24px; gap: 24px; }
.tools footer { padding-right: 3px; }
.trio { width: 199px; height: 60px; display: flex; border: 2px solid #232225; border-radius: 6px; background: #343335; box-shadow: 0 1px 0 #4a494b; }
.trio span { flex: 1; display: flex; align-items: center; justify-content: center; }
.trio span + span { border-left: 2px solid #232225; }

.brushes { width: 160px; }
.brushes .big { width: 158px; padding-top: 20px; }
.brushes .big svg { margin-bottom: 11px; }

.shapes { width: 568px; }
.gallery { width: 347px; height: 140px; margin: 22px 0 0 26px; display: flex; background: #29282b; border: 2px solid #1e1d20; border-radius: 6px; border-bottom: 3px solid #4c4b4e; }
.vbar { width: 33px; background: #151417; display: flex; flex-direction: column; }
.vbar b { height: 33px; background: #3c3b3e; display: flex; justify-content: center; align-items: center; }
.vbar b::after { content: ""; border: 8px solid transparent; border-bottom: 12px solid #111; border-top: 0; }
.vbar .down::after { transform: rotate(180deg); }
.vbar i { height: 41px; margin: 3px 0 auto; background: #454447; }
.checks { padding: 29px 0 0 23px; }
.checks label { display: flex; align-items: center; gap: 7px; height: 44px; margin-bottom: 26px; }
.checks svg { background: linear-gradient(#2c2b2e, #343336); border-radius: 6px; box-shadow: 0 2px 3px #252427; }

.size { width: 157px; }
.size .big { width: 157px; padding: 35px 0 0 4px; }
.size .big svg { margin-bottom: 20px; }

.colors { width: 939px; }
.pick { width: 102px; height: 166px; margin: 26px 10px 0 0; border-radius: 5px; display: flex; flex-direction: column; align-items: center; padding-top: 11px; }
.pick i { width: 74px; height: 74px; background: #fff; margin-bottom: 33px; }
.pick i.black { background: #000; border: 5px solid #fff; }
.pick span { line-height: 30px; }
.chosen { background: #29282b; margin-left: 23px; border-bottom: 2px solid #555; margin-right: 20px; }
.pick + .pick { margin-right: 12px; }
.palette { display: grid; grid-template-columns: repeat(10, 54px); grid-template-rows: repeat(3, 54px); padding-top: 21px; }
.palette i { width: 38px; height: 38px; margin: 9px 8px; border: 2px solid #d6d5d8; box-shadow: 0 0 0 5px #242326; }
.palette .none { background: #1b1a1d; border-color: #77767a; }
.edit { width: 120px; margin-left: 2px; display: flex; flex-direction: column; align-items: center; text-align: center; padding-top: 30px; line-height: 32px; }
.wheel { width: 60px; height: 60px; border-radius: 50%; margin-bottom: 24px; background: radial-gradient(circle, #fff 8%, #fff0 65%), conic-gradient(#e9e05a, #dd7a55 70deg, #e359c8 120deg, #6a2ee0 180deg, #3a56e8 215deg, #43c6ea 260deg, #5fe3a0 310deg, #a9e86a 335deg, #e9e05a); }

.work { height: 1292px; display: flex; background: #2d2b2e; padding-left: 1px; }
.canvas { background: #fefefe; }
.ink { fill: none; stroke: #141315; stroke-width: 3.800; stroke-linecap: round; stroke-linejoin: round; }
.note { font: 29.600px "Noto Sans CJK SC", sans-serif; fill: #1d1d1f; }
.owner { font: 53px "Noto Sans CJK SC", sans-serif; fill: #f3f3f3; }
.brand { font: italic 900 76px Lato, sans-serif; fill: #fff; }
.scroll { flex: 1; border-left: 4px solid #0f0e11; padding: 5px 0 0 6px; }
.scroll i { display: block; width: 14px; height: 733px; border-radius: 7px; background: #6f6d71; }
.status { height: 33px; background: #2d2b2e; border-top: 2px solid #111013; padding-left: 2px; }
.status span { display: block; width: 218px; height: 31px; padding-left: 24px; background: linear-gradient(#545257, #403f43); color: #f2f2f2; font-size: 24px; font-weight: 700; line-height: 29px; }
```
